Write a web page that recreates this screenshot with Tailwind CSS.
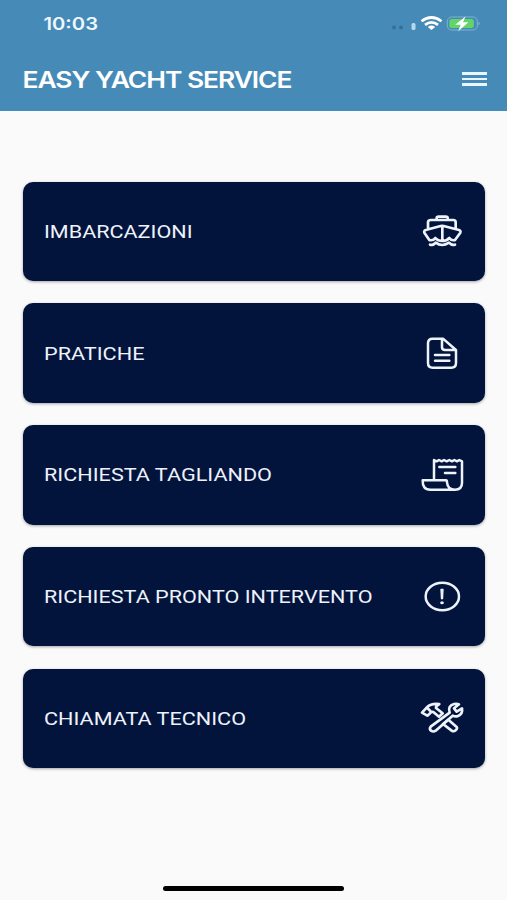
<!DOCTYPE html>
<html lang="it">
<head>
<meta charset="utf-8">
<title>Easy Yacht Service</title>
<script src="https://cdn.jsdelivr.net/npm/@tailwindcss/browser@4"></script>
</head>
<body class="bg-[#fafafa]">
<div class="flex h-[900px] w-[507px] flex-col overflow-hidden bg-[#fafafa] font-['Roboto',sans-serif] text-[#edf2fb]">
  <header class="flex h-[110.5px] shrink-0 flex-col bg-[#468ab8] text-white">
    <div class="flex h-[48px] items-center justify-between pl-[43px] pr-[27px]">
      <svg class="h-6 w-[60px]" viewBox="0 0 60 24"><text x="0.5" y="17.7" textLength="54.5" lengthAdjust="spacingAndGlyphs" class="fill-[#edf7fd] font-['Inter',sans-serif] text-[17px] font-semibold">10:03</text></svg>
      <svg class="h-6 w-[90px]" viewBox="0 0 90 24" fill="none">
        <g transform="translate(-1 0)">
        <circle cx="5" cy="15.500" r="1.900" fill="#326f9b"/><circle cx="12" cy="15.500" r="1.900" fill="#326f9b"/>
        <rect x="22.500" y="11" width="4" height="7" rx="1.500" fill="#b5d9ec"/>
        <g stroke="#fff" stroke-width="2.700"><path d="M32.500 9.300Q42.500 1.700 52.500 9.300M36 12.800Q42.500 7.900 49 12.800"/></g>
        <path d="M38.800 14.900Q42.500 12.200 46.200 14.900L42.500 18Z" fill="#fff"/>
        <rect x="58.300" y="5" width="30" height="13" rx="4.300" stroke="#80b4ce" stroke-width="1"/>
        <rect x="60.300" y="7" width="24.500" height="9" rx="2.500" fill="#63d568"/>
        <path d="M89.500 9.500q2.400 2 0 4.200z" fill="#80b4ce"/>
        <path d="M76.500 4.500l-10.300 8.300h5.500l-2.500 6.500 10.200-9h-5.400z" fill="#fff"/>
        </g>
      </svg>
    </div>
    <div class="flex h-[64px] items-center justify-between pl-[22px] pr-5">
      <h1><svg class="h-8 w-[275px]" viewBox="0 0 275 32"><text x="0.500" y="25.2" textLength="269" lengthAdjust="spacingAndGlyphs" class="fill-white font-['Inter',sans-serif] text-[23px] font-semibold tracking-[-0.04em]">EASY YACHT SERVICE</text></svg></h1>
      <button aria-label="Menu" class="flex w-[25px] flex-col gap-[3px]"><span class="h-[2.5px] bg-[#e7f7ff]"></span><span class="h-[2.5px] bg-[#e7f7ff]"></span><span class="h-[2.5px] bg-[#e7f7ff]"></span></button>
    </div>
  </header>

  <main class="flex grow flex-col gap-[22.3px] px-[22.5px] pt-[71px]">
    <a class="flex h-[99.5px] shrink-0 items-center justify-between rounded-[10px] bg-[#03143c] pl-[21.5px] pr-[11px] shadow-[0_1px_3px_rgba(0,0,0,0.35)]">
      <svg class="h-6 w-[340px]" viewBox="0 0 340 24"><text x="0" y="18.6" textLength="148.500" lengthAdjust="spacingAndGlyphs" class="fill-[#edf2fb] text-[18.5px]">IMBARCAZIONI</text></svg>
      <svg class="h-[60px] w-16 shrink-0" viewBox="0 3 192 180" fill="none" stroke="#edf2fb" stroke-width="8" stroke-linecap="round" stroke-linejoin="round">
        <path d="M80 58V54Q80 50 86 50H107Q113 50 113 54V58M54 87V67Q54 60 63 60H130Q137 60 137 67V87M58 120L43 98Q41 92 47 90L92 78Q96 77 101 78L147 90Q153 92 151 98L135 120M97 79V122M58 120Q70 123 76 114Q83 123 97 123Q110 123 118 114Q124 123 135 120M60 134Q70 137 77 128Q96 142 117 128Q125 137 135 134"/>
      </svg>
    </a>
    <a class="flex h-[99.5px] shrink-0 items-center justify-between rounded-[10px] bg-[#03143c] pl-[21.5px] pr-[11px] shadow-[0_1px_3px_rgba(0,0,0,0.35)]">
      <svg class="h-6 w-[340px]" viewBox="0 0 340 24"><text x="0" y="18.6" textLength="100.500" lengthAdjust="spacingAndGlyphs" class="fill-[#edf2fb] text-[18.5px]">PRATICHE</text></svg>
      <svg class="h-[60px] w-16 shrink-0" viewBox="0 -6 192 180" fill="none" stroke="#edf2fb" stroke-width="7.500" stroke-linecap="round" stroke-linejoin="round">
        <path d="M68 41H99L138 75V114Q138 128 124 128H68Q54 128 54 114V55Q54 41 68 41ZM96 42V67Q96 75 105 75H137M75 90H118M75 107H118"/>
      </svg>
    </a>
    <a class="flex h-[99.5px] shrink-0 items-center justify-between rounded-[10px] bg-[#03143c] pl-[21.5px] pr-[11px] shadow-[0_1px_3px_rgba(0,0,0,0.35)]">
      <svg class="h-6 w-[340px]" viewBox="0 0 340 24"><text x="0" y="18.4" textLength="228" lengthAdjust="spacingAndGlyphs" class="fill-[#edf2fb] text-[18.5px]">RICHIESTA TAGLIANDO</text></svg>
      <svg class="h-[60px] w-16 shrink-0" viewBox="0 0 192 180" fill="none" stroke="#edf2fb" stroke-width="7.500" stroke-linecap="round" stroke-linejoin="round">
        <path d="M72 103V45L80 49 87 45 95 49 102 45 110 49 118 45 126 49 133 45 141 49 148 45 156 49V114Q156 134 135 134H61Q37 134 38 106H108Q111 106 111 112Q113 134 135 134M88 66H136M105 84H136"/>
      </svg>
    </a>
    <a class="flex h-[99.5px] shrink-0 items-center justify-between rounded-[10px] bg-[#03143c] pl-[21.5px] pr-[11px] shadow-[0_1px_3px_rgba(0,0,0,0.35)]">
      <svg class="h-6 w-[340px]" viewBox="0 0 340 24"><text x="0" y="18.4" textLength="328.500" lengthAdjust="spacingAndGlyphs" class="fill-[#edf2fb] text-[18.5px]">RICHIESTA PRONTO INTERVENTO</text></svg>
      <svg class="h-[60px] w-16 shrink-0" viewBox="0 0 192 180" fill="none" stroke="#edf2fb" stroke-width="7.500" stroke-linecap="round" stroke-linejoin="round">
        <ellipse cx="97" cy="88.500" rx="50" ry="41"/><path d="M93 67H99L97.500 95H94.500Z" fill="#edf2fb" stroke-width="4"/><ellipse cx="96" cy="107" rx="5.500" ry="4.500" fill="#edf2fb" stroke="none"/>
      </svg>
    </a>
    <a class="flex h-[99.5px] shrink-0 items-center justify-between rounded-[10px] bg-[#03143c] pl-[21.5px] pr-[11px] shadow-[0_1px_3px_rgba(0,0,0,0.35)]">
      <svg class="h-6 w-[340px]" viewBox="0 0 340 24"><text x="0" y="18.6" textLength="202" lengthAdjust="spacingAndGlyphs" class="fill-[#edf2fb] text-[18.5px]">CHIAMATA TECNICO</text></svg>
      <svg class="h-[60px] w-16 shrink-0" viewBox="0 -3 192 180" fill="none" stroke="#edf2fb" stroke-width="8" stroke-linecap="round" stroke-linejoin="round">
        <path d="M36 71L52 54Q63 42 88 45Q77 51 78 57L98 73L87 83L70 69Q63 67 59 74L52 80ZM52 57L61 66"/>
        <path d="M62 113L119 71Q112 51 132 45Q141 43 147 46L132 58L140 68L156 58Q159 75 144 81Q136 84 128 80L77 125Q70 130 63 125Q57 120 62 113Z"/>
        <path d="M99 105L115 92L140 114Q143 119 137 124Q131 129 125 125Z"/>
      </svg>
    </a>
  </main>
  <div class="mb-[9px] h-[5.5px] w-[181px] shrink-0 self-center rounded-full bg-black"></div>
</div>
</body>
</html>
